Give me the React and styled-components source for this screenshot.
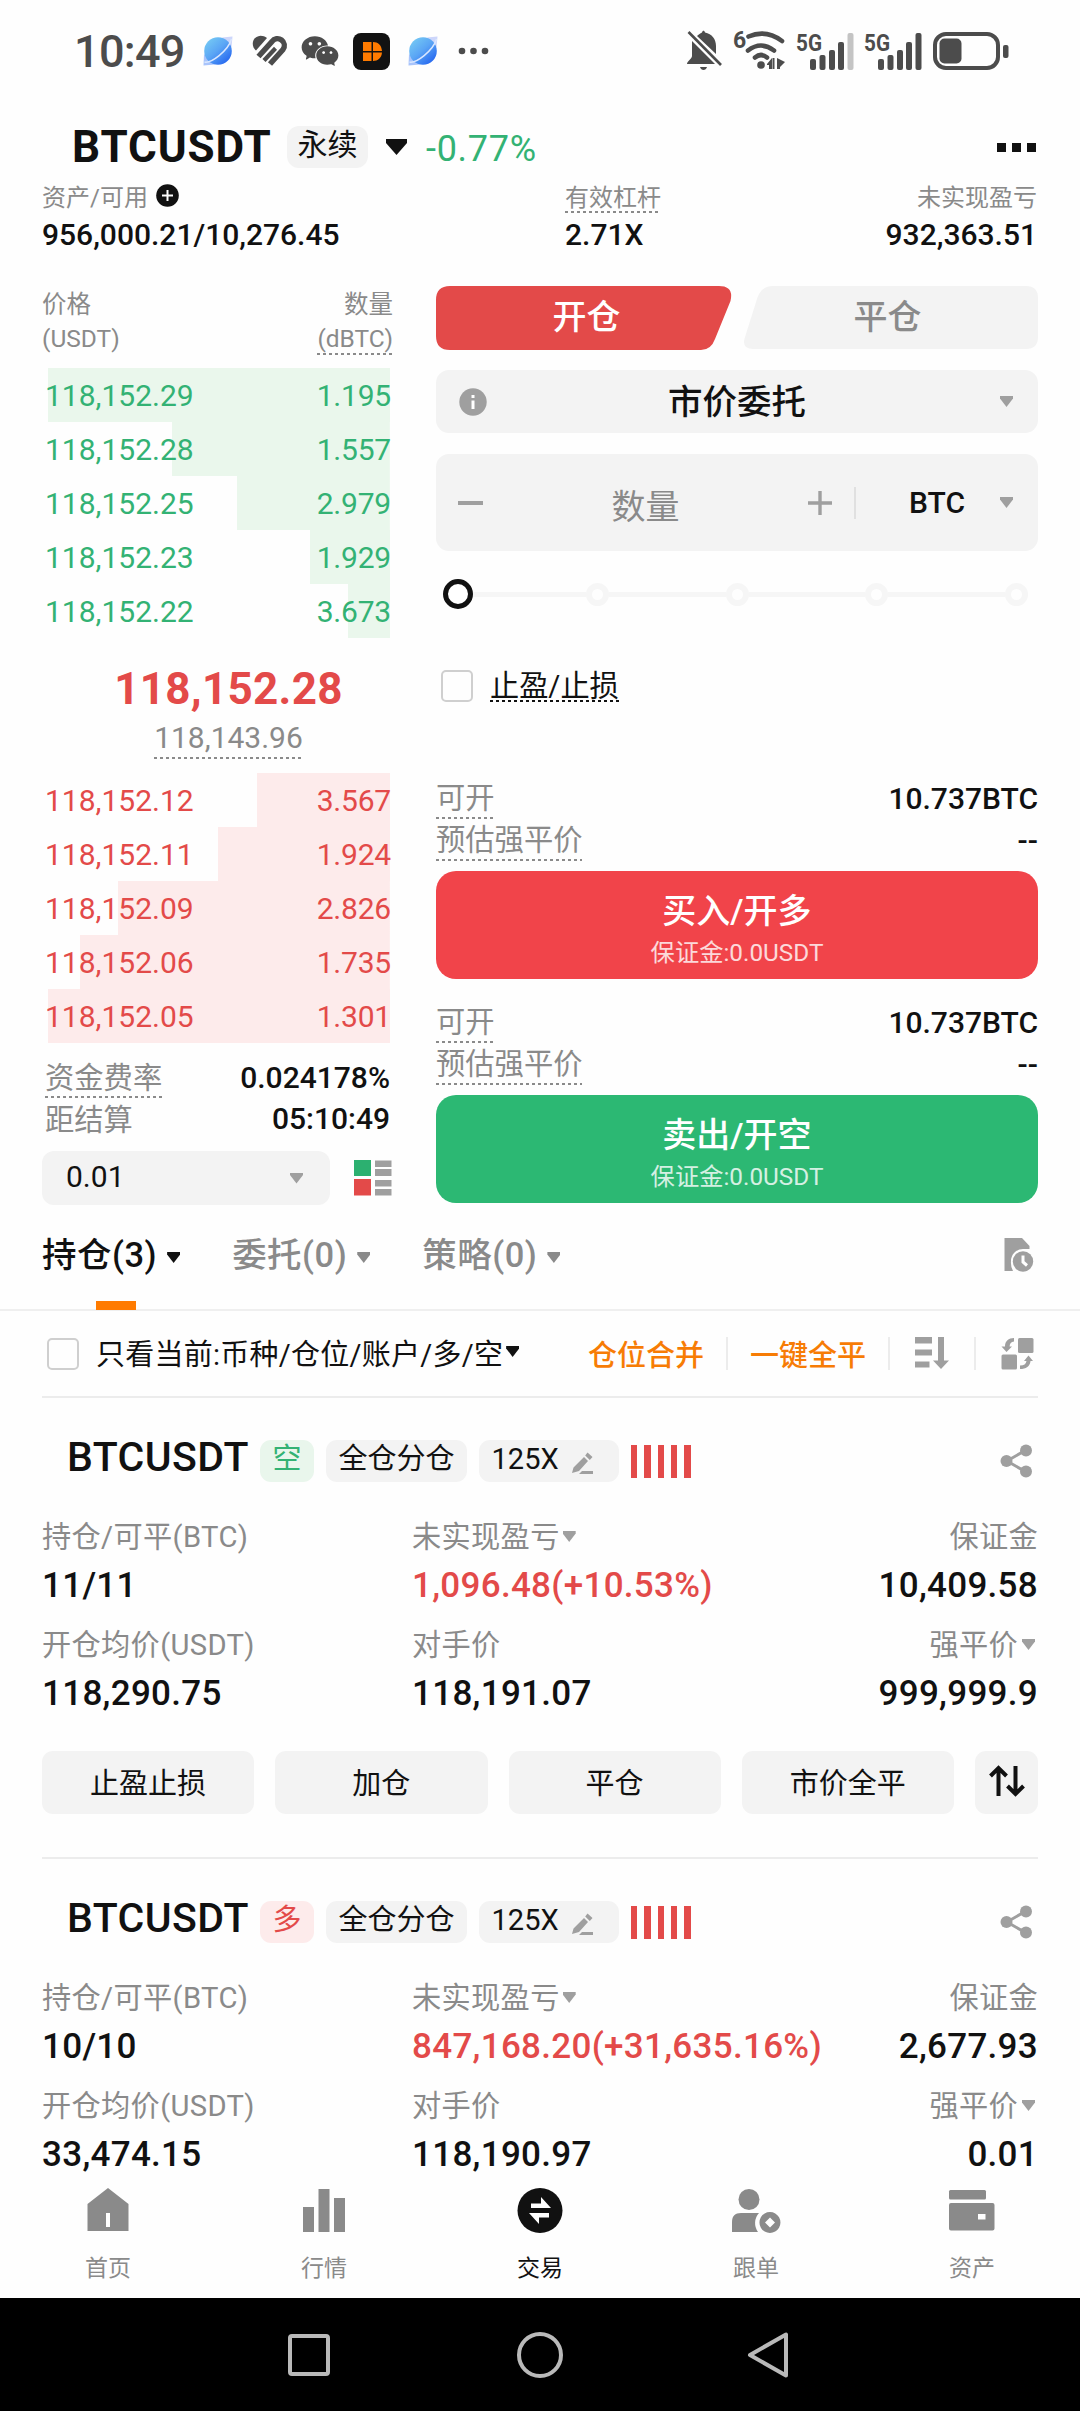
import { useState } from "react";
import styled, { createGlobalStyle, css } from "styled-components";
import { AiFillWechat } from "react-icons/ai";

const RED = "#e34a49";
const GREEN = "#33b274";
const ORANGE = "#f77c05";
const INK = "#111111";
const GRAY = "#8a8a8a";
const ICON = "#9f9f9f";
const FILL = "#f3f3f3";

const asks = [
  { price: "118,152.29", amount: "1.195", depth: 100 },
  { price: "118,152.28", amount: "1.557", depth: 63.7 },
  { price: "118,152.25", amount: "2.979", depth: 44.7 },
  { price: "118,152.23", amount: "1.929", depth: 23.4 },
  { price: "118,152.22", amount: "3.673", depth: 12.3 },
];

const bids = [
  { price: "118,152.12", amount: "3.567", depth: 38.9 },
  { price: "118,152.11", amount: "1.924", depth: 50.3 },
  { price: "118,152.09", amount: "2.826", depth: 79.5 },
  { price: "118,152.06", amount: "1.735", depth: 90.6 },
  { price: "118,152.05", amount: "1.301", depth: 100 },
];

const orderSides = [
  { title: "买入/开多", color: "#f1444a" },
  { title: "卖出/开空", color: "#2cb873" },
];

const tabs = ["持仓(3)", "委托(0)", "策略(0)"];

const positions = [
  {
    id: 1,
    side: "空",
    size: "11/11",
    pnl: "1,096.48(+10.53%)",
    margin: "10,409.58",
    entry: "118,290.75",
    counter: "118,191.07",
    liquidation: "999,999.9",
    actions: ["止盈止损", "加仓", "平仓", "市价全平"],
  },
  {
    id: 2,
    side: "多",
    size: "10/10",
    pnl: "847,168.20(+31,635.16%)",
    margin: "2,677.93",
    entry: "33,474.15",
    counter: "118,190.97",
    liquidation: "0.01",
  },
];

const PlanetIcon = ({ gap }) => (
  <StatusIcon $gap={gap} width="30" height="30" viewBox="0 0 30 30">
    <defs>
      <linearGradient id="planet" x1="0.1" y1="0.1" x2="0.8" y2="0.9">
        <stop offset="0" stopColor="#74c8f4" />
        <stop offset="0.5" stopColor="#5aa5f5" />
        <stop offset="1" stopColor="#2a6cf0" />
      </linearGradient>
    </defs>
    <path d="M19 1.500L29.500 .5L28.500 11Z" fill="#cdd6fb" />
    <path d="M1 18L.5 29.500L12 28.500Z" fill="#a9c4fb" />
    <circle cx="15" cy="15" r="13.800" fill="url(#planet)" />
    <path
      d="M1.500 26C8 27.500 25 15 28.500 3"
      fill="none"
      stroke="#d9e7ff"
      strokeWidth="1.500"
    />
  </StatusIcon>
);

const HeartIcon = () => (
  <StatusIcon $gap={19} width="36" height="32" viewBox="0 0 36 32">
    <path d="M4 15.500C-1.500 11 0 1.500 8.500 .8C11 .8 13 1.500 15 3Z" fill="#4c4c4c" />
    <g fill="none" stroke="#4c4c4c">
      <path d="M6.500 21.500L20 6.500A6.700 6.700 0 0 1 31 14.500L18 29" strokeWidth="5.500" />
      <path d="M12 25.500L23.500 13.200" strokeWidth="4.200" />
    </g>
  </StatusIcon>
);

const ExchangeIcon = () => (
  <StatusIcon $gap={14} width="37" height="37" viewBox="0 0 37 37">
    <rect width="37" height="37" rx="8" fill="#121212" />
    <path d="M10 9H18.500V18H10ZM10 19.500H18.500V28H10Z" fill="#ff7b00" />
    <path d="M20 9C25 9 28.500 12 29 18H20ZM20 19.500H29C28.500 25 25 28 20 28Z" fill="#ff7b00" />
  </StatusIcon>
);

const BellOffIcon = () => (
  <svg width="36" height="42" viewBox="0 0 36 42" fill="#4c4c4c">
    <path d="M5 14V26C5 29 0 31 0 34H28L5 11Z" />
    <path d="M10 6C12 4 14 3 15 2.500C15.500 0 17.500 0 18 2.500C25 4 29 9 29 16V24Z" />
    <path d="M13 37H20C19.500 39 18 40 16.500 40S13.500 39 13 37Z" />
    <path d="M1.500 2L34 35" stroke="#4c4c4c" strokeWidth="2.600" />
  </svg>
);

const WifiIcon = () => (
  <svg width="52" height="42" viewBox="0 0 52 42">
    <Tiny x="-1" y="17.500" $size={23}>
      6
    </Tiny>
    <g fill="none" stroke="#4c4c4c" strokeWidth="4.600" strokeLinecap="round">
      <path d="M14.500 6.500Q32 -1 48 11" />
      <path d="M14 20.500Q27 10.500 40 20.500" />
      <path d="M21 27.500Q27 22.500 33 27.500" />
    </g>
    <circle cx="27" cy="35" r="3.800" fill="#4c4c4c" />
    <path d="M33 34L38 28V39H35V35H33ZM43 28L51 32L46 37V39H43Z" fill="#4c4c4c" />
    <path d="M39.500 28V39" stroke="#4c4c4c" strokeWidth="2" />
  </svg>
);

const SignalIcon = ({ weak }) => (
  <svg width="57" height="40" viewBox="0 0 57 40" fill="#4c4c4c">
    <Tiny x="-1" y="20" $size={24} textLength="26" lengthAdjust="spacingAndGlyphs">
      5G
    </Tiny>
    <rect x="13" y="28" width="6" height="11" rx="2" />
    <rect x="22.500" y="24" width="6" height="15" rx="2" />
    <rect x="32" y="19" width="6" height="20" rx="2" />
    <rect x="41" y="11" width="6" height="28" rx="2" />
    <rect x="50.500" y="2" width="6" height="37" rx="2" fill={weak ? "#c4c4c4" : "#4c4c4c"} />
  </svg>
);

const BatteryIcon = () => (
  <svg width="76" height="38" viewBox="0 0 76 38">
    <rect x="2" y="2" width="63" height="34" rx="11" fill="none" stroke="#4c4c4c" strokeWidth="4" />
    <rect x="6.500" y="6.500" width="22" height="25" rx="5" fill="#4c4c4c" />
    <rect x="70" y="13" width="5.500" height="13" rx="2" fill="#4c4c4c" />
  </svg>
);

const BookLayoutIcon = () => (
  <svg width="38" height="38" viewBox="0 0 38 38">
    <rect y="1" width="17" height="16" fill="#2cb070" />
    <rect y="20" width="17" height="16.500" fill={RED} />
    <path d="M21 1.500H37.500V8H21ZM21 10H37.500V17H21ZM21 21H37.500V27.500H21ZM21 30H37.500V36.500H21Z" fill={ICON} />
  </svg>
);

const HistoryIcon = () => (
  <svg width="30" height="36" viewBox="0 0 30 36">
    <path d="M.5 1H18L25.500 9V12H19A12 12 0 0 0 7 24Q6.500 30 9 34H.5Z" fill={ICON} />
    <circle cx="19" cy="24.500" r="10.200" fill={ICON} />
    <path d="M19 18.500V25L23 28.500" fill="none" stroke="#fff" strokeWidth="3" />
  </svg>
);

const SortIcon = () => (
  <svg width="34" height="33" viewBox="0 0 34 33" fill={ICON}>
    <path d="M0 0H17V6.500H0ZM0 12.500H17V18.500H0ZM0 24.500H14.500V30.500H0Z" />
    <path d="M23 0H29V23.500H34L26 32L18 23.500H23Z" />
  </svg>
);

const SwapIcon = () => (
  <svg width="33" height="33" viewBox="0 0 33 33" fill={ICON}>
    <rect x="17" y="1" width="15.500" height="15" rx="1.500" />
    <rect x=".5" y="17.500" width="15.500" height="15" rx="1.500" />
    <path d="M13 1V4.500C10 5 8.800 6.500 8.600 9.500H11L5.500 15L.5 9.500H4C4 4 7.500 1 13 1Z" />
    <path d="M19 32V28.500C23 28.500 25 27 25.500 24H23L27.500 18.500L32 24H29.500C29 29.500 25 32 19 32Z" />
  </svg>
);

const EditIcon = () => (
  <svg width="22" height="24" viewBox="0 0 22 24" fill={ICON}>
    <path d="M12 6L16 10L7 20L0 22L1.500 16.500ZM15.500 1.500L20.500 6L17.800 9L13.200 4.500Z" />
    <path d="M10 20H21V23H7Z" />
  </svg>
);

const ShareIcon = () => (
  <svg width="33" height="34" viewBox="0 0 33 34" fill={ICON}>
    <path d="M26 6L7 17L26 28" fill="none" stroke={ICON} strokeWidth="3" />
    <circle cx="26" cy="6.500" r="6" />
    <circle cx="6.500" cy="17" r="6" />
    <circle cx="26" cy="27.500" r="6" />
  </svg>
);

const FlipIcon = () => (
  <svg width="36" height="32" viewBox="0 0 36 32" fill="none" stroke={INK} strokeWidth="4">
    <path d="M9.500 31V4M1.500 11L9.500 3L17.500 11" />
    <path d="M26.500 1V28M18.500 21L26.500 29L34.500 21" />
  </svg>
);

const navItems = [
  {
    label: "首页",
    icon: (
      <path fillRule="evenodd" d="M3.500 17L24 1L44.500 17V44H3.500ZM22 26V40H26V26Z" />
    ),
  },
  {
    label: "行情",
    icon: <path d="M3 20H14V45H3ZM18.500 2H29.500V45H18.500ZM34 11H45V45H34Z" />,
  },
  {
    label: "交易",
    icon: (
      <>
        <circle cx="24" cy="23.500" r="22.500" />
        <path d="M15 21V16.500H25V10L35 21ZM33 26V30.500H23V37L13 26Z" fill="#fff" />
      </>
    ),
  },
  {
    label: "跟单",
    icon: (
      <>
        <circle cx="17" cy="12.500" r="10.500" />
        <path d="M0 45V35C0 29 3 26 9 26H27A15 15 0 0 0 26 45Z" />
        <path
          fillRule="evenodd"
          d="M38 25A10.500 10.500 0 1 1 37.900 25ZM38 30.500L33 35.500L38 40.500L43 35.500Z"
        />
      </>
    ),
  },
  {
    label: "资产",
    icon: (
      <>
        <rect x="1" y="3" width="37" height="9.500" rx="1.500" />
        <path
          fillRule="evenodd"
          d="M3 16H44.500Q46.500 16 46.500 18V41.500Q46.500 43.500 44.500 43.500H3Q1 43.500 1 41.500V18Q1 16 3 16ZM30 27V32.500H37.500V27Z"
        />
      </>
    ),
  },
];

const OrderSide = ({ title, color }) => (
  <Side>
    <InfoRow>
      <Dotted>可开</Dotted>
      <strong>10.737BTC</strong>
    </InfoRow>
    <InfoRow>
      <Dotted>预估强平价</Dotted>
      <strong>--</strong>
    </InfoRow>
    <OrderButton $color={color}>
      {title}
      <small>保证金:0.0USDT</small>
    </OrderButton>
  </Side>
);

const PositionCard = ({ position }) => {
  const isShort = position.side === "空";
  return (
    <Card>
      <CardHead>
        <CardSymbol>BTCUSDT</CardSymbol>
        <Tag $tone={isShort ? "green" : "red"}>{position.side}</Tag>
        <Tag>全仓分仓</Tag>
        <Tag>
          125X
          <EditIcon />
        </Tag>
        <RiskBars>
          {[1, 2, 3, 4, 5].map((bar) => (
            <i key={bar} />
          ))}
        </RiskBars>
        <ShareIcon />
      </CardHead>
      <Stats>
        <dt>持仓/可平(BTC)</dt>
        <dt>
          未实现盈亏
          <Caret $color={ICON} $left={3} />
        </dt>
        <dt>保证金</dt>
        <dd>{position.size}</dd>
        <Pnl>{position.pnl}</Pnl>
        <dd>{position.margin}</dd>
      </Stats>
      <Stats>
        <dt>开仓均价(USDT)</dt>
        <dt>对手价</dt>
        <dt>
          强平价
          <Caret $color={ICON} $left={4} $right={3} />
        </dt>
        <dd>{position.entry}</dd>
        <dd>{position.counter}</dd>
        <dd>{position.liquidation}</dd>
      </Stats>
      {position.actions && (
        <Actions>
          {position.actions.map((action) => (
            <button key={action}>{action}</button>
          ))}
          <button>
            <FlipIcon />
          </button>
        </Actions>
      )}
    </Card>
  );
};

const App = () => {
  const [activeTab, setActiveTab] = useState(0);

  return (
    <Page>
      <GlobalStyle />
      <StatusBar>
        <Time>10:49</Time>
        <PlanetIcon gap={19} />
        <HeartIcon />
        <Wechat />
        <ExchangeIcon />
        <PlanetIcon gap={18} />
        <StatusIcon $gap={20} width="32" height="8" viewBox="0 0 32 8" fill="#4c4c4c">
          <circle cx="4" cy="4" r="3.300" />
          <circle cx="15.500" cy="4" r="3.300" />
          <circle cx="27" cy="4" r="3.300" />
        </StatusIcon>
        <StatusRight>
          <BellOffIcon />
          <WifiIcon />
          <SignalIcon weak />
          <SignalIcon />
          <BatteryIcon />
        </StatusRight>
      </StatusBar>

      <Header>
        <h1>BTCUSDT</h1>
        <Contract>永续</Contract>
        <svg width="21" height="16" viewBox="0 0 21 16">
          <path d="M0 0H21V4L10.500 16L0 4Z" fill={INK} />
        </svg>
        <Change>-0.77%</Change>
        <More>
          <i />
          <i />
          <i />
        </More>
      </Header>

      <Summary>
        <div>
          <label>
            资产/可用
            <svg width="23" height="23" viewBox="0 0 23 23">
              <circle cx="11.500" cy="11.500" r="11.300" fill={INK} />
              <path d="M6 11.500H17M11.500 6V17" stroke="#fff" strokeWidth="2" />
            </svg>
          </label>
          <strong>956,000.21/10,276.45</strong>
        </div>
        <div>
          <label>
            <Dotted $h={31}>有效杠杆</Dotted>
          </label>
          <strong>2.71X</strong>
        </div>
        <div>
          <label>未实现盈亏</label>
          <strong>932,363.51</strong>
        </div>
      </Summary>

      <Trade>
        <Book>
          <BookHead>
            <div>
              价格
              <br />
              (USDT)
            </div>
            <div>
              数量
              <br />
              <Dotted $h={33}>(dBTC)</Dotted>
            </div>
          </BookHead>
          {asks.map((row) => (
            <BookRow key={row.price} $color={GREEN} $tint="#eaf7ec" $depth={row.depth}>
              <span>{row.price}</span>
              <span>{row.amount}</span>
            </BookRow>
          ))}
          <LastPrice>
            <b>118,152.28</b>
            <Dotted $h={44}>118,143.96</Dotted>
          </LastPrice>
          {bids.map((row) => (
            <BookRow key={row.price} $color={RED} $tint="#fdebeb" $depth={row.depth}>
              <span>{row.price}</span>
              <span>{row.amount}</span>
            </BookRow>
          ))}
          <Funding>
            <InfoRow $h={41}>
              <Dotted $h={41}>资金费率</Dotted>
              <strong>0.024178%</strong>
            </InfoRow>
            <InfoRow $h={41}>
              <Countdown>距结算</Countdown>
              <strong>05:10:49</strong>
            </InfoRow>
          </Funding>
          <Precision>
            <div>
              0.01
              <Caret $color={ICON} />
            </div>
            <BookLayoutIcon />
          </Precision>
        </Book>

        <Form>
          <OpenClose>
            <svg width="602" height="64" viewBox="0 0 602 64">
              <path
                d="M14 0H283Q298 0 294.500 15L279 53Q275 64 265 64H14Q0 64 0 50V14Q0 0 14 0Z"
                fill={RED}
              />
              <path
                d="M337 0H590Q602 0 602 12V51Q602 63 590 63H317Q305 63 309 51L321 13Q325 0 337 0Z"
                fill={FILL}
              />
            </svg>
            <OpenCloseTab $active>开仓</OpenCloseTab>
            <OpenCloseTab>平仓</OpenCloseTab>
          </OpenClose>
          <OrderType>
            <svg width="28" height="28" viewBox="0 0 28 28">
              <circle cx="14" cy="14" r="13.700" fill={ICON} />
              <path d="M14 7V10M14 12.500V21" stroke="#fff" strokeWidth="3" />
            </svg>
            市价委托
            <Caret $color={ICON} />
          </OrderType>
          <Quantity>
            <svg width="25" height="26" viewBox="0 0 25 26">
              <path d="M0 13H25" stroke={ICON} strokeWidth="4" />
            </svg>
            <span>数量</span>
            <svg width="24" height="26" viewBox="0 0 24 26">
              <path d="M0 13H24M12 1V25" stroke={ICON} strokeWidth="3.400" />
            </svg>
            <Unit>BTC</Unit>
            <Caret $color={ICON} />
          </Quantity>
          <Slider>
            <Knob />
            {[25, 50, 75, 100].map((step) => (
              <Step key={step}>
                <i />
                <b />
              </Step>
            ))}
          </Slider>
          <StopRow>
            <Checkbox />
            <Dotted $h={33} $color={INK}>
              止盈/止损
            </Dotted>
          </StopRow>
          {orderSides.map((side) => (
            <OrderSide key={side.title} {...side} />
          ))}
        </Form>
      </Trade>

      <Tabs>
        {tabs.map((tab, index) => (
          <Tab key={tab} $active={index === activeTab} onClick={() => setActiveTab(index)}>
            {tab}
            <Caret $color={index === activeTab ? INK : GRAY} $left={10} />
          </Tab>
        ))}
        <HistoryIcon />
      </Tabs>

      <Filter>
        <Checkbox />
        <FilterLabel>
          只看当前:币种/仓位/账户/多/空
          <Caret $color={INK} $left={3} />
        </FilterLabel>
        <FilterLink>仓位合并</FilterLink>
        <Rule $left={22} $right={22} />
        <FilterLink>一键全平</FilterLink>
        <Rule $left={22} $right={25} />
        <SortIcon />
        <Rule $left={25} $right={25} />
        <SwapIcon />
      </Filter>

      <Cards>
        {positions.map((position) => (
          <PositionCard key={position.id} position={position} />
        ))}
      </Cards>

      <Nav>
        {navItems.map((item) => (
          <NavItem key={item.label} $active={item.label === "交易"}>
            <svg width="48" height="47" viewBox="0 0 48 47" fill="currentColor">
              {item.icon}
            </svg>
            {item.label}
          </NavItem>
        ))}
      </Nav>

      <SystemBar>
        <svg width="48" height="50" viewBox="0 0 48 50">
          <rect x="4" y="6" width="38" height="38" rx="2" />
        </svg>
        <svg width="48" height="50" viewBox="0 0 48 50">
          <circle cx="24" cy="25" r="21" />
        </svg>
        <svg width="48" height="50" viewBox="0 0 48 50">
          <path d="M40 4.500V45.500L4 25Z" strokeLinejoin="round" />
        </svg>
      </SystemBar>
    </Page>
  );
};

const GlobalStyle = createGlobalStyle`
  * {
    box-sizing: border-box;
  }
  body {
    margin: 0;
    background: #fefefe;
    color: ${INK};
    font-family: Roboto, "Noto Sans CJK SC", sans-serif;
  }
  button {
    padding: 0;
    border: none;
    color: inherit;
    font-family: inherit;
  }
  strong {
    font-weight: 500;
  }
  svg {
    display: block;
    flex-shrink: 0;
    overflow: visible;
  }
`;

const Page = styled.div`
  width: 1080px;
  height: 2411px;
  display: flex;
  flex-direction: column;
  overflow: hidden;
`;

const StatusBar = styled.div`
  height: 102px;
  padding: 0 71px 0 74px;
  display: flex;
  align-items: center;
  flex-shrink: 0;
`;

const Time = styled.div`
  width: 110px;
  color: #4c4c4c;
  font-size: 45px;
  font-weight: 500;
  letter-spacing: -0.7px;
  white-space: nowrap;
`;

const StatusIcon = styled.svg`
  margin-left: ${({ $gap }) => $gap}px;
`;

const Wechat = styled(AiFillWechat)`
  width: 42px;
  height: 42px;
  margin: 0 -2px 0 11px;
  color: #4c4c4c;
`;

const StatusRight = styled.div`
  display: flex;
  align-items: center;
  gap: 11px;
  margin-left: auto;
`;

const Tiny = styled.text`
  fill: #4c4c4c;
  font-size: ${({ $size }) => $size}px;
  font-weight: 700;
`;

const Header = styled.div`
  height: 74px;
  padding: 16px 44px 0 72px;
  display: flex;
  align-items: center;
  flex-shrink: 0;
  h1 {
    width: 215px;
    margin: 0;
    font-size: 44px;
    font-weight: 700;
    line-height: 50px;
    letter-spacing: 0.9px;
  }
`;

const Contract = styled.div`
  width: 81px;
  height: 42px;
  margin-right: 18px;
  border-radius: 12px;
  background: ${FILL};
  font-size: 30px;
  line-height: 38px;
  text-align: center;
`;

const Change = styled.div`
  margin: 4px 0 0 19px;
  color: ${GREEN};
  font-size: 36px;
  letter-spacing: 0.7px;
`;

const More = styled.div`
  display: flex;
  gap: 6px;
  margin-left: auto;
  i {
    width: 9px;
    height: 9px;
    background: ${INK};
  }
`;

const Summary = styled.div`
  padding: 0 43px 0 42px;
  display: grid;
  grid-template-columns: 523px 1fr auto;
  flex-shrink: 0;
  label {
    height: 42px;
    padding-bottom: 3px;
    display: flex;
    align-items: center;
    color: ${GRAY};
    font-size: 24px;
  }
  label span {
    margin-top: 4px;
  }
  label svg {
    margin: -1px 0 0 8px;
  }
  strong {
    display: block;
    font-size: 30px;
    line-height: 33px;
  }
  div:last-child {
    text-align: right;
  }
  div:last-child label {
    justify-content: flex-end;
  }
`;

const Dotted = styled.span`
  display: inline-block;
  height: ${({ $h = 42 }) => $h}px;
  line-height: ${({ $h = 42 }) => $h + 1}px;
  background: repeating-linear-gradient(
      90deg,
      ${({ $color = GRAY }) => $color} 0 3px,
      transparent 3px 6px
    )
    left bottom / 100% 2px no-repeat;
`;

const Trade = styled.div`
  height: 919px;
  margin-top: 35px;
  padding: 0 42px;
  display: grid;
  grid-template-columns: 351px 602px;
  column-gap: 43px;
  flex-shrink: 0;
`;

const Book = styled.div`
  padding-top: 2px;
`;

const BookHead = styled.div`
  height: 68px;
  margin-bottom: 12px;
  display: flex;
  justify-content: space-between;
  color: ${GRAY};
  font-size: 24.500px;
  line-height: 34px;
  div:last-child {
    text-align: right;
  }
`;

const BookRow = styled.div`
  height: 54px;
  margin: 0 3px 0 6px;
  display: flex;
  align-items: center;
  justify-content: space-between;
  padding-top: 1px;
  background: linear-gradient(${({ $tint }) => `${$tint}, ${$tint}`}) right /
    ${({ $depth }) => $depth}% 100% no-repeat;
  color: ${({ $color }) => $color};
  font-size: 30px;
  span:first-child {
    margin-left: -3px;
  }
  span:last-child {
    margin-right: -1px;
    letter-spacing: -0.2px;
  }
`;

const LastPrice = styled.div`
  height: 135px;
  padding: 25px 0 0 22px;
  display: flex;
  flex-direction: column;
  align-items: center;
  color: ${GRAY};
  font-size: 30px;
  b {
    color: ${RED};
    font-size: 44px;
    line-height: 52px;
    letter-spacing: 0.3px;
  }
`;

const Funding = styled.div`
  padding: 14px 3px 12px;
`;

const InfoRow = styled.div`
  height: ${({ $h = 42 }) => $h}px;
  display: flex;
  align-items: center;
  justify-content: space-between;
  color: ${GRAY};
  font-size: 29.300px;
  strong {
    color: ${INK};
    font-size: 30px;
  }
`;

const Countdown = styled.span`
  padding-bottom: 3px;
`;

const Precision = styled.div`
  display: flex;
  align-items: center;
  gap: 24px;
  div {
    width: 288px;
    height: 54px;
    padding: 0 27px 3px 24px;
    display: flex;
    align-items: center;
    justify-content: space-between;
    border-radius: 12px;
    background: ${FILL};
    font-size: 30px;
  }
  i {
    margin-top: 3px;
  }
`;

const Caret = styled.i`
  display: inline-block;
  flex-shrink: 0;
  width: 13px;
  height: 11px;
  margin: 0 ${({ $right = 0 }) => $right}px 0 ${({ $left = 0 }) => $left}px;
  background: ${({ $color }) => $color};
  clip-path: polygon(0 0, 100% 0, 100% 22%, 50% 100%, 0 22%);
`;

const Form = styled.div`
  display: flex;
  flex-direction: column;
`;

const OpenClose = styled.div`
  position: relative;
  height: 64px;
  display: flex;
  justify-content: space-between;
  svg {
    position: absolute;
    inset: 0;
  }
`;

const OpenCloseTab = styled.div`
  position: relative;
  width: ${({ $active }) => ($active ? 301 : 301)}px;
  color: ${({ $active }) => ($active ? "#ffffff" : GRAY)};
  font-size: 34px;
  font-weight: 500;
  line-height: 62px;
  text-align: center;
`;

const fieldStyle = css`
  display: flex;
  align-items: center;
  border-radius: 13px;
  background: ${FILL};
`;

const OrderType = styled.div`
  ${fieldStyle}
  height: 63px;
  margin: 20px 0 21px;
  padding: 0 25px 0 23px;
  justify-content: space-between;
  font-size: 34.500px;
  font-weight: 500;
  line-height: 60px;
  svg {
    margin-right: -13px;
  }
`;

const Quantity = styled.div`
  ${fieldStyle}
  height: 97px;
  padding: 0 25px 0 22px;
  span {
    flex: 1;
    padding-top: 3px;
    color: ${GRAY};
    font-size: 34px;
    text-align: center;
  }
`;

const Unit = styled.div`
  width: 146px;
  margin-left: 22px;
  border-left: 2px solid #e0e0e0;
  padding-left: 53px;
  font-size: 30px;
  font-weight: 500;
  line-height: 32px;
`;

const Slider = styled.div`
  height: 86px;
  padding: 0 10px;
  display: flex;
  align-items: center;
`;

const Knob = styled.div`
  position: relative;
  z-index: 1;
  width: 30px;
  height: 30px;
  margin: 0 -4px 0 -3px;
  border: 5.500px solid ${INK};
  border-radius: 50%;
  background: #ffffff;
`;

const Step = styled.div`
  flex: 1;
  display: flex;
  align-items: center;
  i {
    flex: 1;
    height: 5px;
    background: #f6f6f6;
  }
  b {
    width: 23px;
    height: 23px;
    border: 6px solid #f6f6f6;
    border-radius: 50%;
  }
`;

const StopRow = styled.div`
  height: 65px;
  margin: 16px 0 59px;
  padding-left: 5px;
  display: flex;
  align-items: center;
  gap: 17px;
  font-size: 29.200px;
`;

const Checkbox = styled.div`
  width: 32px;
  height: 32px;
  border: 2.500px solid #cfcfcf;
  border-radius: 5px;
`;

const Side = styled.div`
  margin-bottom: 22px;
`;

const OrderButton = styled.button`
  width: 100%;
  height: 108px;
  margin-top: 10px;
  padding-top: 9px;
  display: flex;
  flex-direction: column;
  align-items: center;
  justify-content: center;
  border-radius: 20px;
  background: ${({ $color }) => $color};
  color: #ffffff;
  font-size: 34px;
  font-weight: 500;
  line-height: 46px;
  small {
    font-size: 24.300px;
    font-weight: 400;
    line-height: 38px;
    opacity: 0.8;
  }
`;

const Tabs = styled.div`
  height: 106px;
  padding: 0 46px 4px 42px;
  display: flex;
  align-items: center;
  gap: 52px;
  border-bottom: 2px solid #efefef;
  flex-shrink: 0;
  svg {
    margin-left: auto;
  }
`;

const Tab = styled.div`
  position: relative;
  color: ${({ $active }) => ($active ? INK : GRAY)};
  font-size: 34.500px;
  font-weight: 500;
  line-height: 50px;
  letter-spacing: 0.5px;
  white-space: nowrap;
  i {
    margin-bottom: 4px;
  }
  ${({ $active }) =>
    $active &&
    css`
      &::after {
        content: "";
        position: absolute;
        left: 54px;
        bottom: -30px;
        width: 40px;
        height: 9px;
        background: #ff7b00;
      }
    `}
`;

const Filter = styled.div`
  height: 87px;
  margin: 0 42px;
  padding: 0 4px 0 5px;
  display: flex;
  align-items: center;
  border-bottom: 2px solid #ececec;
  flex-shrink: 0;
`;

const FilterLabel = styled.div`
  margin: -4px auto 0 17px;
  display: flex;
  align-items: center;
  font-size: 29px;
  letter-spacing: 0.25px;
`;

const FilterLink = styled.div`
  margin-top: -1px;
  color: ${ORANGE};
  font-size: 29px;
  font-weight: 500;
`;

const Rule = styled.div`
  width: 2px;
  height: 33px;
  margin: 0 ${({ $right }) => $right}px 0 ${({ $left }) => $left}px;
  background: #ececec;
`;

const Cards = styled.div`
  flex: 1;
  min-height: 0;
  overflow: hidden;
`;

const Card = styled.div`
  height: 461px;
  margin: 0 42px;
  border-bottom: 2px solid #ececec;
`;

const CardHead = styled.div`
  height: 112px;
  padding: 14px 5px 0 25px;
  display: flex;
  align-items: center;
  > svg {
    margin-left: auto;
  }
`;

const CardSymbol = styled.div`
  width: 193px;
  margin-top: -8px;
  font-size: 41px;
  font-weight: 500;
  line-height: 44px;
  letter-spacing: 0.4px;
`;

const tones = {
  green: { background: "#e9f6ec", color: GREEN },
  red: { background: "#fdebeb", color: RED },
  plain: { background: FILL, color: INK },
};

const Tag = styled.div`
  height: 42px;
  margin-right: 12px;
  padding: 0 12.500px 4px;
  display: flex;
  align-items: center;
  border-radius: 11px;
  background: ${({ $tone = "plain" }) => tones[$tone].background};
  color: ${({ $tone = "plain" }) => tones[$tone].color};
  font-size: 29px;
  line-height: 38px;
  svg {
    margin: 8px 13px 0 13px;
  }
`;

const RiskBars = styled.div`
  display: flex;
  gap: 7px;
  i {
    width: 6.300px;
    height: 33px;
    background: ${RED};
  }
`;

const Stats = styled.dl`
  margin: 0 0 10px;
  display: grid;
  grid-template-columns: 370px 1fr auto;
  dt {
    color: ${GRAY};
    font-size: 29.200px;
    line-height: 54px;
    letter-spacing: 0.35px;
  }
  dt i {
    margin-bottom: 5px;
  }
  dd {
    margin: 0;
    font-size: 35px;
    font-weight: 500;
    line-height: 44px;
    letter-spacing: 0.3px;
  }
  > :nth-child(3n) {
    text-align: right;
  }
`;

const Pnl = styled.dd`
  color: ${RED};
`;

const Actions = styled.div`
  margin-top: 35px;
  display: grid;
  grid-template-columns: repeat(4, 1fr) 63px;
  gap: 21px;
  button {
    height: 63px;
    padding-bottom: 3px;
    display: flex;
    align-items: center;
    justify-content: center;
    border-radius: 11px;
    background: ${FILL};
    font-size: 29px;
  }
`;

const Nav = styled.div`
  height: 120px;
  padding-top: 9px;
  display: grid;
  grid-template-columns: repeat(5, 1fr);
  background: #fefefe;
  flex-shrink: 0;
`;

const NavItem = styled.div`
  display: flex;
  flex-direction: column;
  align-items: center;
  gap: 18px;
  color: ${({ $active }) => ($active ? INK : GRAY)};
  font-size: 23px;
  line-height: 34px;
`;

const SystemBar = styled.div`
  height: 113px;
  display: flex;
  align-items: center;
  justify-content: center;
  gap: 182px;
  background: #000000;
  flex-shrink: 0;
  svg {
    fill: none;
    stroke: #b9b9b9;
    stroke-width: 4;
  }
`;

export default App;
